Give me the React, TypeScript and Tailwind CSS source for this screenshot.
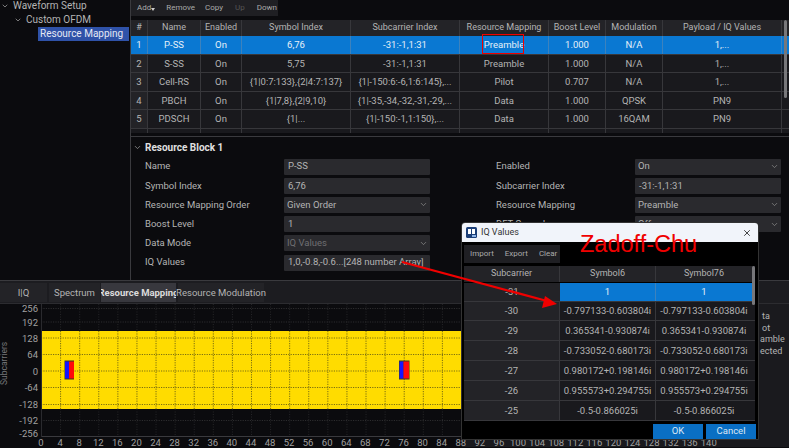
import { ChevronDown, X } from "lucide-react";

const columns = [
  { label: "#", w: "w-[17px]" },
  { label: "Name", w: "w-[53px]" },
  { label: "Enabled", w: "w-[41px]" },
  { label: "Symbol Index", w: "w-[109px]" },
  { label: "Subcarrier Index", w: "w-[109px]" },
  { label: "Resource Mapping", w: "w-[89px]" },
  { label: "Boost Level", w: "w-[57px]" },
  { label: "Modulation", w: "w-[57px]" },
  { label: "Payload / IQ Values", w: "w-[119px]" },
];

const rows = [
  ["1", "P-SS", "On", "6,76", "-31:-1,1:31", "Preamble", "1.000", "N/A", "1,..."],
  ["2", "S-SS", "On", "5,75", "-31:-1,1:31", "Preamble", "1.000", "N/A", "1,..."],
  ["3", "Cell-RS", "On", "{1|0:7:133},{2|4:7:137}", "{1|-150:6:-6,1:6:145},...", "Pilot", "0.707", "N/A", "1,..."],
  ["4", "PBCH", "On", "{1|7,8},{2|9,10}", "{1|-35,-34,-32,-31,-29,...", "Data", "1.000", "QPSK", "PN9"],
  ["5", "PDSCH", "On", "{1|...", "{1|-150:-1,1:150},...", "Data", "1.000", "16QAM", "PN9"],
];

const iqRows = [
  ["-30", "-0.797133-0.603804i"],
  ["-29", "0.365341-0.930874i"],
  ["-28", "-0.733052-0.680173i"],
  ["-27", "0.980172+0.198146i"],
  ["-26", "0.955573+0.294755i"],
  ["-25", "-0.5-0.866025i"],
];

const yLabels = [
  ["256", 4],
  ["192", 17.5],
  ["128", 33.5],
  ["64", 50],
  ["0", 66.5],
  ["-64", 83],
  ["-128", 100],
  ["-192", 116],
  ["-256", 129],
] as const;

function Field({ label, value, select, dim }: { label: string; value: string; select?: boolean; dim?: boolean }) {
  return (
    <div className="flex h-[19.2px] items-center">
      <div className="w-[139px] text-[9.5px] text-[#b4b4b4]">{label}</div>
      <div className={`flex h-[16px] w-[146px] items-center justify-between rounded-[1px] bg-[#2a2a2e] ${select ? "pl-[3px]" : "pl-[4px]"} pr-[2px] text-[9.5px] ${dim ? "text-[#6f6f72]" : "text-[#b4b4b4]"}`}>
        <span className="whitespace-nowrap">{value}</span>
        {select && <ChevronDown className="h-[9px] w-[9px] text-[#8a8a8a]" />}
      </div>
    </div>
  );
}

function Chart() {
  const xs = Array.from({ length: 23 }, (_, i) => i);
  const ys = [4, 17.5, 33.5, 50, 66.5, 83, 100, 116];
  return (
    <svg width="462" height="133" className="block shrink-0">
      <rect width="462" height="133" fill="#0b0b0e" />
      <rect x="41" y="27" width="420" height="78" fill="#ffdc00" />
      {xs.map((i) => (
        <g key={i}>
          <line x1={41.5 + i * 19.09} y1="0" x2={41.5 + i * 19.09} y2="27" stroke="#2c2c2e" strokeWidth="0.8" strokeDasharray="1 1.5" />
          <line x1={41.5 + i * 19.09} y1="27" x2={41.5 + i * 19.09} y2="105" stroke="#7a6e10" strokeWidth="1" strokeDasharray="1.2 1.2" />
          <line x1={41.5 + i * 19.09} y1="105" x2={41.5 + i * 19.09} y2="132" stroke="#2c2c2e" strokeWidth="0.8" strokeDasharray="1 1.5" />
        </g>
      ))}
      {ys.map((y) => (
        <line key={y} x1="41" y1={y + 0.5} x2="461" y2={y + 0.5} stroke={y > 27 && y < 105 ? "#7a6e10" : "#2c2c2e"} strokeWidth="1" strokeDasharray="1.2 1.2" />
      ))}
      <line x1="41" y1="132.5" x2="461" y2="132.5" stroke="#3a3a3e" />
      <line x1="41.5" y1="0" x2="41.5" y2="133" stroke="#2a2a2e" />
      <line x1="461.5" y1="0" x2="461.5" y2="133" stroke="#3a3a3e" />
      <rect x="64.5" y="56.5" width="9.5" height="19" fill="#3a3a20" />
      <rect x="65" y="57.5" width="4" height="17" fill="#1414ff" />
      <rect x="69" y="57.5" width="5" height="17" fill="#ff0a0a" />
      <rect x="399" y="56.5" width="10.5" height="19" fill="#3a3a20" />
      <rect x="399.5" y="57.5" width="4" height="17" fill="#1414ff" />
      <rect x="403.5" y="57.5" width="5.5" height="17" fill="#ff0a0a" />
    </svg>
  );
}

export default function App() {
  return (
    <div className="relative h-[448px] w-[789px] overflow-hidden bg-[#0b0b0e] text-[9.5px] text-[#b4b4b4]" style={{ fontFamily: 'Roboto, "Noto Sans", sans-serif' }}>
      <div className="flex h-[281px] border-b border-[#3a3a3e]">
        {/* tree */}
        <div className="w-[131px] shrink-0 border-r border-[#3a3a3e] text-[10px] leading-[14px]">
          <div className="flex h-[12px] items-center pl-[1px]">
            <ChevronDown className="mr-[4px] h-[8px] w-[8px]" />
            Waveform Setup
          </div>
          <div className="mt-[1px] flex h-[13px] items-center pl-[14px]">
            <ChevronDown className="mr-[4px] h-[8px] w-[8px]" />
            Custom OFDM
          </div>
          <div className="ml-[38px] mt-[1px] flex h-[14px] w-[91px] items-center bg-[#2f52a8] pl-[2px] text-[#e4e8f4]">Resource Mapping</div>
        </div>

        <div className="flex min-w-0 flex-1 flex-col">
          {/* toolbar */}
          <div className="flex h-[16px] w-[147px] items-center bg-[#1f1f23] pl-[6px] text-[8px] text-[#aaa]">
            <span className="relative">Add<span className="absolute -right-[4px] top-[6px] border-x-[2.5px] border-t-[3px] border-x-transparent border-t-[#ccc]" /></span>
            <span className="ml-[15px]">Remove</span>
            <span className="ml-[10px]">Copy</span>
            <span className="ml-[12px] text-[#555]">Up</span>
            <span className="ml-[12px]">Down</span>
          </div>

          {/* table */}
          <div className="relative mt-[4px] h-[113px] overflow-hidden">
            <div className="flex h-[16px] bg-[#232327] text-[9px]">
              {columns.map((c) => (
                <div key={c.label} className={`${c.w} flex shrink-0 items-center justify-center whitespace-nowrap border-r border-[#37373b]`}>
                  {c.label}
                </div>
              ))}
            </div>
            {rows.map((row, r) => (
              <div key={row[0]} className={`flex h-[18.5px] border-b border-[#37373b] ${r === 0 ? "bg-[#0a78d2] text-[#e6f0f8]" : "bg-[#19191d]"}`}>
                {row.map((cell, i) => (
                  <div key={i} className={`${columns[i].w} flex shrink-0 items-center justify-center overflow-hidden whitespace-nowrap border-r pt-px ${r === 0 ? "border-[#3d82bd]" : "border-[#37373b]"} ${i === 0 && r > 0 ? "bg-[#232327]" : ""}`}>
                    {cell}
                  </div>
                ))}
              </div>
            ))}
            <div className="flex h-[5px] bg-[#19191d]">
              {columns.map((c) => (
                <div key={c.label} className={`${c.w} shrink-0 border-r border-[#37373b]`} />
              ))}
            </div>
            <div className="absolute left-[653px] top-[0px] h-[78px] w-[3px] rounded-sm bg-[#77777a]" />
          </div>

          {/* resource block */}
          <div className="mt-[3px] flex-1 border-t border-[#3a3a3e] pl-[2px]">
            <div className="flex h-[20px] items-center text-[10px] font-bold text-[#e0e0e0]">
              <ChevronDown className="mr-[3px] h-[9px] w-[9px] text-[#999]" />
              Resource Block 1
            </div>
            <div className="flex pl-[12px]">
              <div className="w-[351px]">
                <Field label="Name" value="P-SS" />
                <Field label="Symbol Index" value="6,76" />
                <Field label="Resource Mapping Order" value="Given Order" select />
                <Field label="Boost Level" value="1" />
                <Field label="Data Mode" value="IQ Values" select dim />
                <Field label="IQ Values" value="1,0,-0.8,-0.6...[248 number Array]" />
              </div>
              <div className="w-[285px]">
                <Field label="Enabled" value="On" select />
                <Field label="Subcarrier Index" value="-31:-1,1:31" />
                <Field label="Resource Mapping" value="Preamble" select />
                <Field label="DFT Spread" value="Off" select />
              </div>
            </div>
          </div>
        </div>
      </div>

      {/* bottom tabs */}
      <div className="flex h-[23px] items-stretch border-b border-[#2c2c30] bg-[#1c1c20] pb-[1px] pt-[2px]">
        <div className="flex w-[47px] items-center justify-center bg-[#232327] pt-[2px]">I|Q</div>
        <div className="ml-[2px] flex w-[51px] items-center justify-center bg-[#232327] pt-[2px]">Spectrum</div>
        <div className="ml-[1px] flex w-[75px] items-center justify-center overflow-hidden whitespace-nowrap bg-[#38383e] pt-px text-[9.5px] font-bold text-[#dcdcdc]">Resource Mapping</div>
        <div className="ml-[2px] flex w-[86px] items-center justify-center whitespace-nowrap bg-[#232327] pt-[2px]">Resource Modulation</div>
      </div>

      {/* chart */}
      <div className="relative flex h-[143px]">
        <Chart />
        <div className="flex-1 bg-[#1a1a1e] pl-[298px] pt-[7px] text-[9px] leading-[11.7px]">
          <div className="pl-[2px]">ta</div>
          <div className="pl-[2px]">ot</div>
          <div>amble</div>
          <div>ected</div>
        </div>
        {yLabels.map(([l, y]) => (
          <div key={l} className="absolute left-[8px] w-[30px] text-right leading-[10px] text-[#a0a0a0]" style={{ top: y - 4 }}>{l}</div>
        ))}
        <div className="absolute left-[-12px] top-[60px] w-[32px] -rotate-90 whitespace-nowrap text-center text-[8.5px] leading-[10px] text-[#77777a]">Subcarriers</div>
        <div className="absolute left-[31.5px] top-[134px] flex leading-[10px] text-[#a0a0a0]">
          {Array.from({ length: 36 }, (_, i) => (
            <div key={i} className="w-[19.09px] text-center">{i * 4}</div>
          ))}
        </div>
      </div>

      {/* IQ dialog */}
      <div className="absolute left-[461px] top-[222px] h-[218px] w-[298px] overflow-hidden rounded-t-[4px] border border-[#333] bg-black">
        <div className="flex h-[19px] items-center bg-[#f1f4fa] pl-[4px] pr-[6px] text-[9px] text-[#333]">
          <svg width="11" height="11" viewBox="0 0 11 11" className="mr-[4px]">
            <rect width="11" height="11" rx="1.5" fill="#1c3f78" />
            <rect x="2" y="2" width="3" height="5" fill="#fff" />
            <rect x="6" y="2" width="3" height="5" fill="#fff" />
            <rect x="6" y="8" width="4" height="2" fill="#8fb5e8" />
          </svg>
          IQ Values
          <X className="ml-auto h-[10px] w-[10px] text-[#222]" />
        </div>
        <div className="ml-[2px] mt-[3px] flex h-[18px] w-[96px] items-center bg-[#1f1f23] pl-[6px] text-[8px] text-[#aaa]">
          <span>Import</span>
          <span className="ml-[11px]">Export</span>
          <span className="ml-[11px]">Clear</span>
        </div>
        <div className="relative ml-[2px] mt-[3px] w-[291px]">
          <div className="flex h-[16px] bg-[#232327] text-[9px]">
            <div className="flex w-[96px] items-center justify-center border-r border-[#37373b]">Subcarrier</div>
            <div className="flex w-[96px] items-center justify-center border-r border-[#37373b]">Symbol6</div>
            <div className="flex w-[96px] items-center justify-center">Symbol76</div>
          </div>
          <div className="flex h-[19.5px] border-b border-[#37373b] pt-px text-[#e6f0f8]">
            <div className="flex w-[96px] items-center justify-center bg-[#232327] text-[#b4b4b4]">-31</div>
            <div className="flex w-[96px] items-center justify-center border-r border-[#3d82bd] bg-[#0a78d2]">1</div>
            <div className="flex w-[96px] items-center justify-center bg-[#0a78d2]">1</div>
          </div>
          {iqRows.map(([sc, v]) => (
            <div key={sc} className="flex h-[19.85px] border-b border-[#37373b] bg-[#19191d]">
              <div className="flex w-[96px] items-center justify-center border-r border-[#37373b] bg-[#232327] pt-px">{sc}</div>
              <div className="flex w-[96px] items-center justify-center border-r border-[#37373b] pt-px">{v}</div>
              <div className="flex w-[96px] items-center justify-center pt-px">{v}</div>
            </div>
          ))}
          <div className="absolute left-[288px] top-0 h-[39px] w-[3px] rounded-sm bg-[#77777a]" />
        </div>
        <div className="mt-[3px] flex justify-end gap-[3px] pr-[2px]">
          <div className="flex h-[15px] w-[50px] items-center justify-center bg-[#0a6fc4] text-[#dce8f4]">OK</div>
          <div className="flex h-[15px] w-[50px] items-center justify-center bg-[#0a6fc4] text-[#dce8f4]">Cancel</div>
        </div>
      </div>

      {/* annotations */}
      <div className="absolute left-[482px] top-[34px] h-[20px] w-[42px] border-[1.5px] border-[#f00000]" />
      <div className="absolute left-[580px] top-[231px] text-[23.5px] leading-[26px] text-[#f00000]" style={{ fontFamily: '"Liberation Sans", sans-serif' }}>Zadoff-Chu</div>
      <svg width="160" height="60" className="absolute left-[400px] top-[260px]">
        <line x1="2" y1="2" x2="147" y2="41" stroke="#f00000" strokeWidth="2.2" />
        <polygon points="157,44 145,36 142,48" fill="#f00000" />
      </svg>
    </div>
  );
}
